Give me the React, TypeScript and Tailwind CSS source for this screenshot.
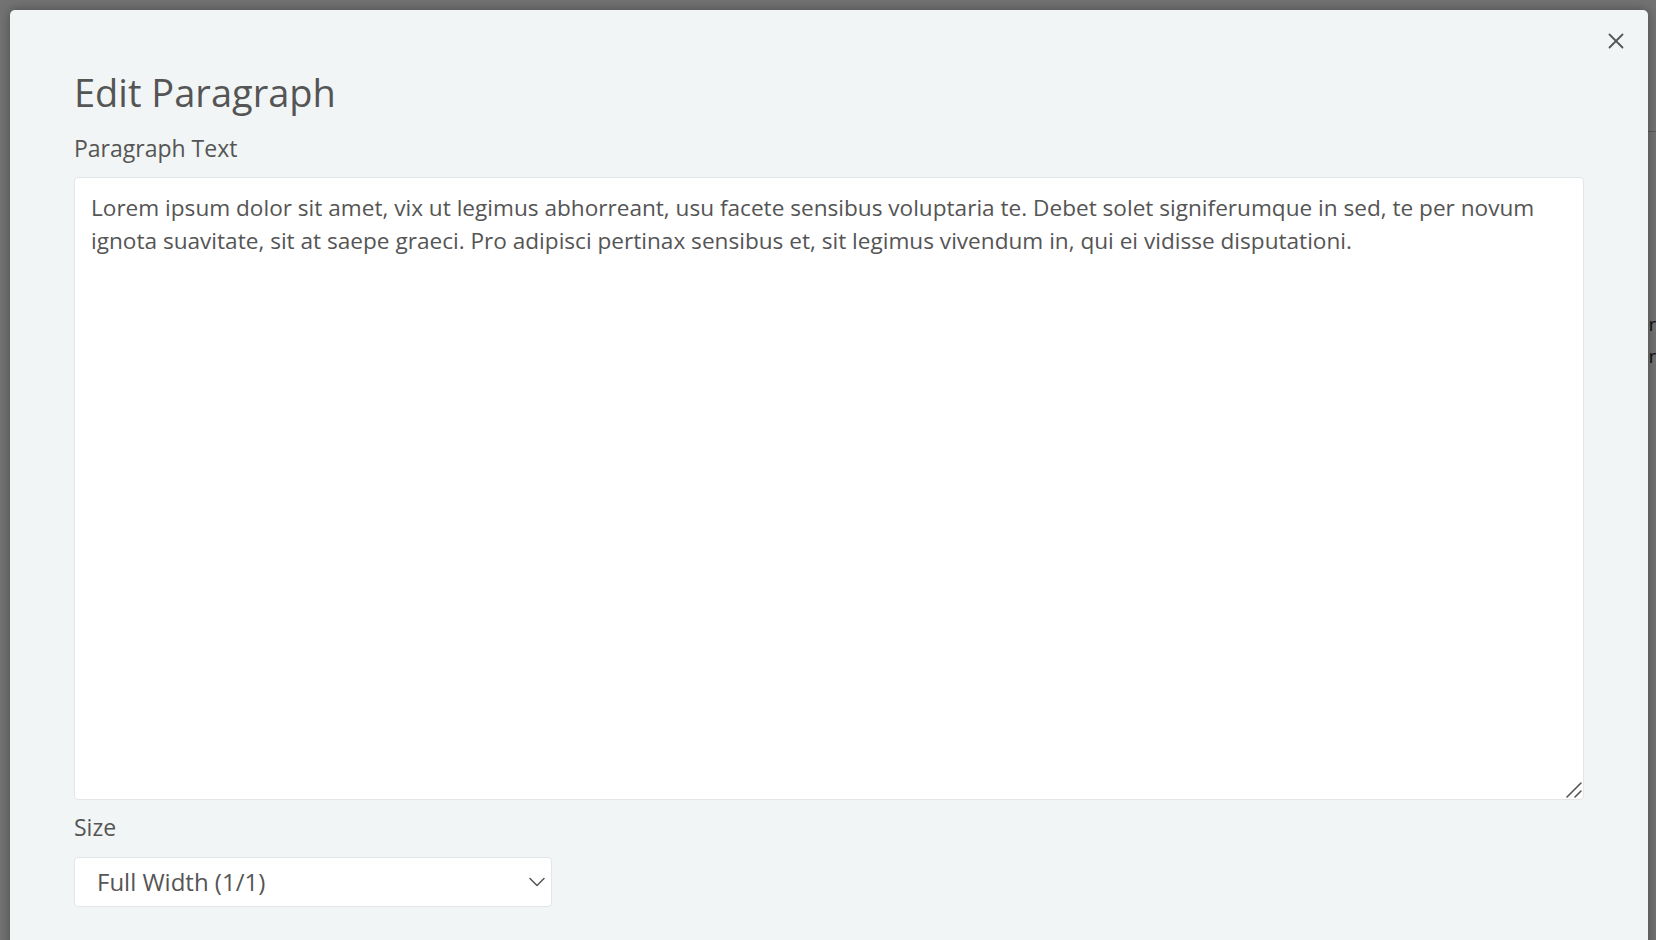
import { useState } from "react";

const LOREM =
  "Lorem ipsum dolor sit amet, vix ut legimus abhorreant, usu facete sensibus voluptaria te. Debet solet signiferumque in sed, te per novum ignota suavitate, sit at saepe graeci. Pro adipisci pertinax sensibus et, sit legimus vivendum in, qui ei vidisse disputationi.";

function CloseIcon() {
  return (
    <svg width="16" height="16" viewBox="0 0 16 16" fill="none" stroke="#555" strokeWidth="1.8" strokeLinecap="round">
      <path d="M1.5 1.5L14.5 14.5M14.5 1.5L1.5 14.5" />
    </svg>
  );
}

function Chevron() {
  return (
    <svg width="16" height="10" viewBox="0 0 16 10" fill="none" stroke="#555" strokeWidth="1.5" strokeLinecap="round" strokeLinejoin="round">
      <path d="M1 1.5L8 8.5L15 1.5" />
    </svg>
  );
}

function ResizeGrip() {
  return (
    <svg width="18" height="18" viewBox="0 0 18 18" fill="none" stroke="#555" strokeWidth="1.6" strokeLinecap="round">
      <path d="M2 16L16 2M10 16L16 10" />
    </svg>
  );
}

export default function App() {
  const [text, setText] = useState(LOREM);
  const [size, setSize] = useState("full");

  return (
    <div className="relative h-[940px] w-[1656px] overflow-hidden bg-white font-[family-name:'Open_Sans','Noto_Sans',sans-serif]">
      {/* page behind the dialog */}
      <div className="flex h-full flex-col">
        <header className="flex h-[132px] justify-end">
          <div className="w-[60px] border-b border-[#c8c8c8]" />
        </header>
        <div className="flex flex-col items-end pt-[176px] text-[18px] leading-[32px] text-[#1a1a1a]">
          <span>Banner</span>
          <span>Corner</span>
        </div>
      </div>

      {/* overlay */}
      <div className="absolute inset-0 bg-black/55" />

      {/* dialog */}
      <div className="absolute left-[10px] right-[8px] top-[10px] bottom-[-20px] rounded-[5px] bg-[#f2f5f6] px-16 pt-[58px] shadow-[0_0_12px_rgba(0,0,0,0.35)]">
        <button type="button" className="absolute right-[23px] top-[22px] p-[1px]">
          <CloseIcon />
        </button>

        <h1 className="text-[38px] leading-[48px] text-[#555]">Edit Paragraph</h1>

        <label className="mt-[18px] block text-[23px] leading-[28px] text-[#555]">Paragraph Text</label>
        <div className="relative mt-[15px]">
          <textarea
            value={text}
            onChange={(e) => setText(e.target.value)}
            className="block h-[623px] w-full resize-none rounded-[4px] border border-[#e2e6e8] bg-white px-4 pt-[13px] text-[22.6px] leading-[33px] text-[#555] outline-none"
          />
          <span className="pointer-events-none absolute bottom-[1px] right-[1px]">
            <ResizeGrip />
          </span>
        </div>

        <label className="mt-[13px] block text-[23px] leading-[28px] text-[#555]">Size</label>
        <div className="relative mt-[16px] w-[478px]">
          <select
            value={size}
            onChange={(e) => setSize(e.target.value)}
            className="block h-[50px] w-full appearance-none rounded-[4px] border border-[#e2e6e8] bg-white pl-[22px] text-[24px] text-[#555] outline-none"
          >
            <option value="full">Full Width (1/1)</option>
            <option value="half">Half Width (1/2)</option>
            <option value="third">One Third (1/3)</option>
          </select>
          <span className="pointer-events-none absolute right-[7px] top-[20px]">
            <Chevron />
          </span>
        </div>
      </div>
    </div>
  );
}
